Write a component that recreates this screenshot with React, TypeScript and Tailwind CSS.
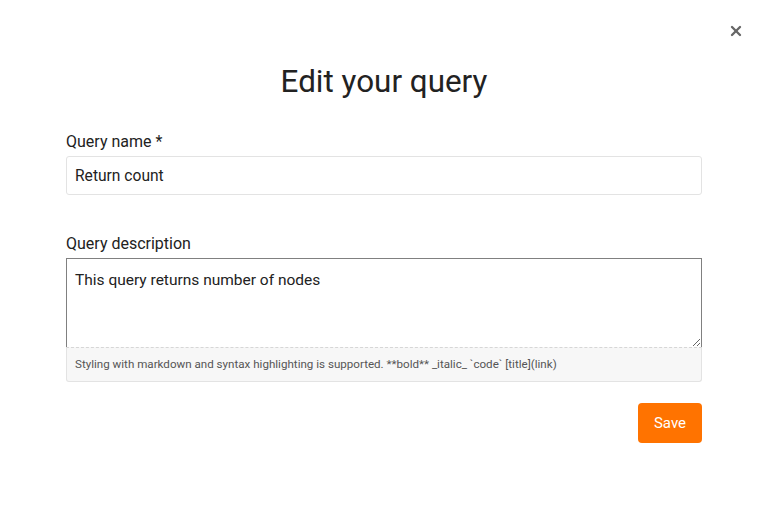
import { X } from 'lucide-react';

export default function App() {
  return (
    <div className="relative min-h-screen bg-white font-['Roboto',sans-serif] text-[#222]">
      {/* close */}
      <button className="absolute right-[26px] top-[23px] text-[#666]">
        <X className="w-[16px] h-[16px]" strokeWidth={3.5} />
      </button>

      <div className="ml-[66px] w-[636px] pt-[64px]">
        <h1 className="text-center text-[31.4px] leading-[36px] text-[#222]">Edit your query</h1>

        <label className="mt-[30px] block text-[16px] leading-[24px] text-[#222]">Query name *</label>
        <input
          className="mt-[2px] block h-[39px] w-full rounded-[3px] border border-[#e3e3e3] px-[8px] text-[15.6px] text-[#222] outline-none"
          defaultValue="Return count"
        />

        <label className="mt-[37px] block text-[16px] leading-[24px] text-[#222]">Query description</label>
        <div className="mt-[2px]">
          <textarea
            className="block h-[89px] w-full resize-y border border-b-0 border-[#808080] px-[8px] pt-[9px] pb-[7px] text-[15.5px] leading-[24px] text-[#222] outline-none"
            defaultValue="This query returns number of nodes"
          />
          <div className="flex h-[35px] items-center rounded-b-[3px] border border-[#e3e3e3] border-t-[#d6d6d6] [border-top-style:dashed] bg-[#f7f7f7] px-[8px] text-[11.6px] text-[#555]">
            Styling with markdown and syntax highlighting is supported. **bold** _italic_ `code` [title](link)
          </div>
        </div>

        <div className="mt-[21px] flex justify-end">
          <button className="h-[40px] w-[64px] rounded-[4px] bg-[#ff7300] text-[15px] text-white">Save</button>
        </div>
      </div>
    </div>
  );
}
